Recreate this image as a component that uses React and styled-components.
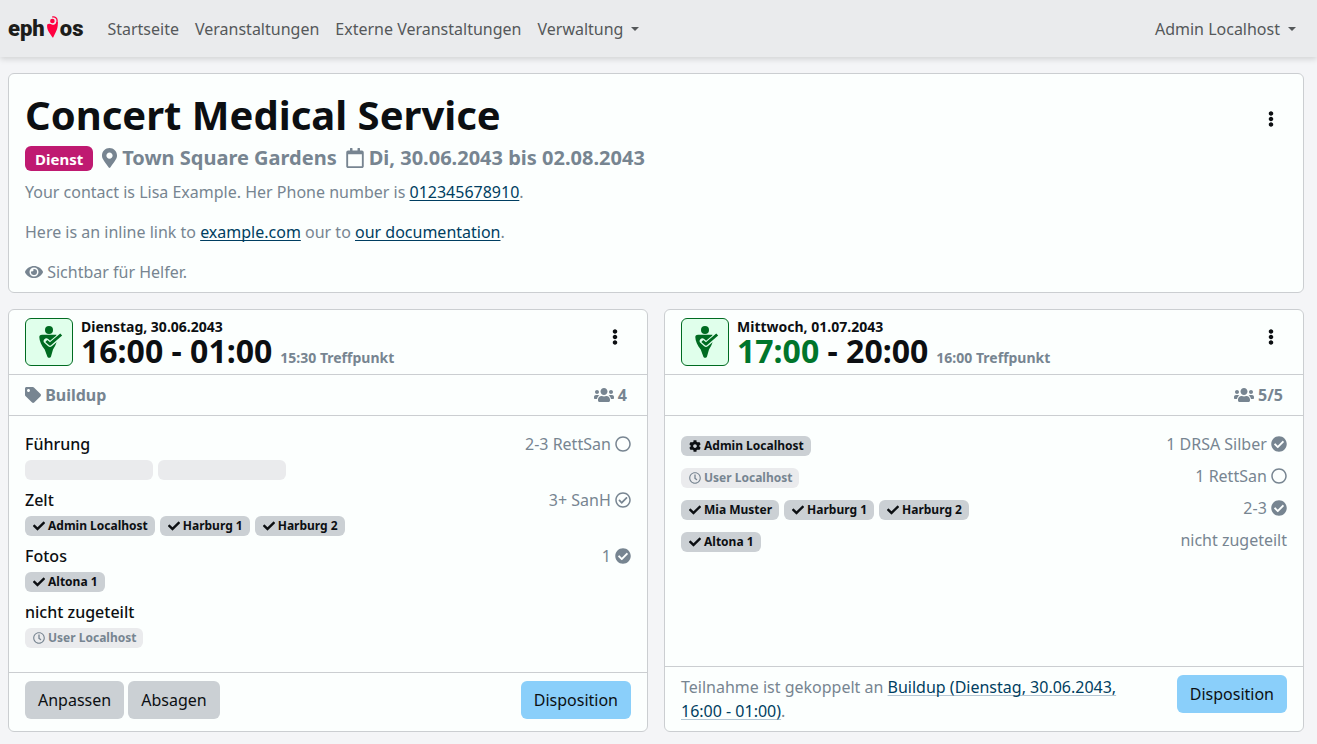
import React from "react";
import styled, { createGlobalStyle } from "styled-components";
import {
  FaCheck,
  FaCheckCircle,
  FaCog,
  FaEllipsisV,
  FaEye,
  FaMapMarkerAlt,
  FaRegCalendar,
  FaRegCheckCircle,
  FaRegCircle,
  FaRegClock,
  FaTag,
  FaUsers,
} from "react-icons/fa";

const color = {
  page: "#f4f5f7",
  nav: "#eaebed",
  card: "#fcfffe",
  line: "#cbced1",
  text: "#0c0f12",
  muted: "#778591",
  link: "#003e61",
  secondary: "#cbd0d4",
  primary: "#8acffa",
  faint: "#eaebed",
  pink: "#bf1a71",
  green: "#00752b",
  confirmed: "#006b21",
  confirmedFill: "#e0ffeb",
};

const GlobalStyle = createGlobalStyle`
  *, *::before, *::after { box-sizing: border-box; }
  body {
    margin: 0;
    background: ${color.page};
    color: ${color.text};
    font: 400 16px/24px "Noto Sans", sans-serif;
  }
  h1, h2, h3, p, ul { margin: 0; padding: 0; }
  ul { list-style: none; }
  svg { flex: none; vertical-align: -0.125em; }
`;

/* Font Awesome glyphs have different widths at the same height. */
const EyeIcon = styled(FaEye)`
  width: 18px;
`;
const MarkerIcon = styled(FaMapMarkerAlt)`
  width: 15px;
`;
const CalendarIcon = styled(FaRegCalendar)`
  width: 18px;
`;
const UsersIcon = styled(FaUsers)`
  width: 20px;
`;
const MenuIcon = styled(FaEllipsisV)`
  width: 6px;
`;

const Navbar = styled.nav`
  display: flex;
  align-items: center;
  padding: 9px 13px 8px 8px;
  background: ${color.nav};
  box-shadow: 0 2px 6px rgba(0, 0, 0, 0.15);
`;

const Brand = styled.a`
  display: flex;
  align-items: center;
  margin-right: 16px;
  color: #1d1d1b;
  font: 900 22px/32px "Roboto", sans-serif;
  text-decoration: none;
  svg { width: 11px; height: 22px; margin: 0 2px 4px; }
`;

const NavLinks = styled.div`
  display: flex;
  flex: 1;
`;

const NavLink = styled.a`
  padding: 8px;
  color: #55585a;
  text-decoration: none;
  white-space: nowrap;
  margin-left: ${(p) => (p.$end ? "auto" : "0")};
`;

const Caret = styled.span`
  display: inline-block;
  margin-left: 8px;
  vertical-align: 4px;
  border: 4px solid transparent;
  border-top: 4px solid currentColor;
  border-bottom: 0;
`;

const Page = styled.main`
  display: flex;
  flex-direction: column;
  gap: 16px;
  padding: 16px 13px 12px 8px;
`;

const Card = styled.section`
  display: flex;
  flex-direction: column;
  background: ${color.card};
  border: 1px solid ${color.line};
  border-radius: 6px;
`;

const EventBody = styled.div`
  display: flex;
  flex-direction: column;
  padding: 16px 16px 8px;
  color: ${color.muted};
`;

const TitleRow = styled.div`
  display: flex;
  align-items: flex-end;
  justify-content: space-between;
  height: 48px;
  margin-bottom: 8px;
`;

const Title = styled.h1`
  align-self: flex-start;
  color: ${color.text};
  font-size: 40px;
  line-height: 50px;
`;

const Facts = styled.div`
  display: flex;
  align-items: flex-start;
  gap: 9px;
  height: 26px;
  margin-bottom: 8px;
  font-size: 20px;
  font-weight: 700;
  line-height: 24px;
`;

const Fact = styled.span`
  display: flex;
  align-items: center;
  gap: 5px;
`;

const TypeBadge = styled.span`
  padding: 2px 10px 0;
  color: #fff;
  background: ${color.pink};
  border-radius: 6px;
  font-size: 15px;
  line-height: 23px;
`;

const Paragraph = styled.p`
  & + & { margin-top: 16px; }
`;

const Link = styled.a`
  color: ${color.link};
  text-decoration: underline 1px ${(p) => (p.$soft ? "#b4c6d3" : color.link)};
  text-underline-offset: 2px;
  text-decoration-skip-ink: none;
`;

const MenuButton = styled.button`
  display: flex;
  align-items: center;
  height: 38px;
  padding: 0 13px;
  border: 0;
  background: none;
  color: ${color.text};
  font-size: 16px;
`;

const Shifts = styled.div`
  display: grid;
  grid-template-columns: repeat(2, minmax(0, 1fr));
  gap: 16px;
`;

const ShiftHeader = styled.header`
  display: flex;
  align-items: flex-start;
  gap: 8px;
  padding: 8px 16px;
  border-bottom: 1px solid ${color.line};
`;

const StateIcon = styled.div`
  width: 48px;
  height: 48px;
  color: ${color.confirmed};
  background: ${color.confirmedFill};
  border: 1px solid currentColor;
  border-radius: 6px;
  svg { display: block; width: 46px; height: 46px; }
`;

const When = styled.div`
  flex: 1;
  font-weight: 700;
`;

const Day = styled.div`
  font-size: 14px;
  line-height: 17px;
`;

const Time = styled.h2`
  display: flex;
  align-items: baseline;
  gap: 8px;
  font-size: 32px;
  line-height: 31px;
`;

const Early = styled.span`
  color: ${color.green};
`;

const Meeting = styled.small`
  color: ${color.muted};
  font-size: 14px;
  line-height: 17px;
`;

const InfoRow = styled.div`
  display: flex;
  justify-content: space-between;
  padding: 8px 20px 8px 16px;
  border-bottom: 1px solid ${color.line};
  color: ${color.muted};
  font-weight: 700;
`;

const ShiftBody = styled.ul`
  display: flex;
  flex: 1;
  flex-direction: column;
  gap: 8px;
  padding: 16px 16px 24px;
`;

const Row = styled.li`
  display: flex;
  justify-content: space-between;
  align-items: flex-end;
`;

const BlockTitle = styled.span`
  font-weight: 500;
`;

const Need = styled.span`
  color: ${color.muted};
`;

const Badges = styled.div`
  display: flex;
  flex-wrap: wrap;
  gap: 5px;
  margin-top: ${(p) => (p.$below ? "4px" : "0")};
`;

const Badge = styled.span`
  display: flex;
  align-items: center;
  gap: 3px;
  min-width: ${(p) => (p.$empty ? "128px" : "0")};
  height: 20px;
  padding: 0 7px 0 8px;
  color: ${(p) => (p.$faint ? color.muted : color.text)};
  background: ${(p) => (p.$faint ? color.faint : color.secondary)};
  border-radius: 6px;
  font-size: 12px;
  font-weight: 700;
  line-height: 20px;
`;

const ShiftFooter = styled.footer`
  display: flex;
  align-items: flex-start;
  gap: 4px;
  padding: ${(p) => (p.$roomy ? "8px 16px 12px" : "8px 16px")};
  border-top: 1px solid ${color.line};
  color: ${color.muted};
`;

const Note = styled.p`
  flex: 1;
  padding-right: 48px;
`;

const Button = styled.button`
  height: 38px;
  padding: 0 13px;
  margin-left: ${(p) => (p.$primary ? "auto" : "0")};
  border: 0;
  border-radius: 6px;
  color: ${color.text};
  background: ${(p) => (p.$primary ? color.primary : color.secondary)};
  font: inherit;
`;

const badgeIcons = { check: FaCheck, cog: FaCog, clock: FaRegClock };
const needIcons = { open: FaRegCircle, enough: FaRegCheckCircle, full: FaCheckCircle };

function LogoFigure() {
  return (
    <svg viewBox="0 0 10 20" aria-hidden="true">
      <circle cx="4.900" cy="4.500" r="2.100" fill="#ff0040" />
      <path
        d="M4.800 .9C7.500 .4 9.300 2 9.200 4.600C9.200 6.300 8.800 7.300 8 8.500"
        fill="none"
        stroke="#ff0040"
        strokeWidth="1.200"
      />
      <path
        d="M.2 7.700C1.500 6.600 3 7 5 8C7 8 8.200 7 8.600 5.400L9.800 5.400C10 9 9.500 12 8 14.500L5.600 19.600H5L1.700 14.500C.3 12-.2 9.600 .2 7.700Z"
        fill="#ff0040"
      />
    </svg>
  );
}

function ConfirmedFigure() {
  return (
    <svg viewBox="0 0 46 46" role="img" aria-label="Bestätigt">
      <circle cx="23" cy="11" r="4" fill="currentColor" />
      <path
        d="M13.300 18C13.300 16.500 14.500 15.700 16 15.700H30.500V23C30 25.500 28.300 28.500 27 30.500L25 37.500C24.600 39.200 21.700 39.200 21.300 37.500L18.700 30.500C15.500 26.500 13.300 22 13.300 18Z"
        fill="currentColor"
      />
      <path
        d="M20.400 22L24 25.200L36 15.200"
        fill="none"
        stroke={color.confirmedFill}
        strokeWidth="5.400"
        strokeLinecap="round"
        strokeLinejoin="round"
      />
      <path
        d="M20.300 22L24 25.200L35.200 15.500"
        fill="none"
        stroke="currentColor"
        strokeWidth="2.900"
        strokeLinejoin="round"
      />
    </svg>
  );
}

function Person({ icon, name }) {
  const Icon = badgeIcons[icon];
  return (
    <Badge $faint={icon === "clock"}>
      <Icon /> {name}
    </Badge>
  );
}

function Requirement({ text, state }) {
  const Icon = needIcons[state];
  return (
    <Need>
      {text} {Icon && <Icon />}
    </Need>
  );
}

function People({ people, below }) {
  return (
    <Badges $below={below}>
      {people.map(([icon, name], i) =>
        icon ? <Person key={i} icon={icon} name={name} /> : <Badge key={i} $faint $empty />
      )}
    </Badges>
  );
}

function ShiftTop({ day, children, meeting }) {
  return (
    <ShiftHeader>
      <StateIcon>
        <ConfirmedFigure />
      </StateIcon>
      <When>
        <Day>{day}</Day>
        <Time>
          <span>{children}</span>
          <Meeting>{meeting} Treffpunkt</Meeting>
        </Time>
      </When>
      <MenuButton type="button" aria-label="Schichtmenü">
        <MenuIcon />
      </MenuButton>
    </ShiftHeader>
  );
}

const buildup = [
  { title: "Führung", need: "2-3 RettSan", state: "open", people: [[], []] },
  {
    title: "Zelt",
    need: "3+ SanH",
    state: "enough",
    people: [["check", "Admin Localhost"], ["check", "Harburg 1"], ["check", "Harburg 2"]],
  },
  { title: "Fotos", need: "1", state: "full", people: [["check", "Altona 1"]] },
  { title: "nicht zugeteilt", people: [["clock", "User Localhost"]] },
];

const service = [
  { need: "1 DRSA Silber", state: "full", people: [["cog", "Admin Localhost"]] },
  { need: "1 RettSan", state: "open", people: [["clock", "User Localhost"]] },
  {
    need: "2-3",
    state: "full",
    people: [["check", "Mia Muster"], ["check", "Harburg 1"], ["check", "Harburg 2"]],
  },
  { need: "nicht zugeteilt", people: [["check", "Altona 1"]] },
];

export default function App() {
  return (
    <>
      <GlobalStyle />
      <Navbar>
        <Brand href="#" aria-label="ephios">
          <span>eph</span>
          <LogoFigure />
          <span>os</span>
        </Brand>
        <NavLinks>
          <NavLink href="#">Startseite</NavLink>
          <NavLink href="#">Veranstaltungen</NavLink>
          <NavLink href="#">Externe Veranstaltungen</NavLink>
          <NavLink href="#">
            Verwaltung
            <Caret />
          </NavLink>
          <NavLink href="#" $end>
            Admin Localhost
            <Caret />
          </NavLink>
        </NavLinks>
      </Navbar>
      <Page>
        <Card>
          <EventBody>
            <TitleRow>
              <Title>Concert Medical Service</Title>
              <MenuButton type="button" aria-label="Veranstaltungsmenü">
                <MenuIcon />
              </MenuButton>
            </TitleRow>
            <Facts>
              <TypeBadge>Dienst</TypeBadge>
              <Fact>
                <MarkerIcon />
                Town Square Gardens
              </Fact>
              <Fact>
                <CalendarIcon />
                Di, 30.06.2043 bis 02.08.2043
              </Fact>
            </Facts>
            <Paragraph>
              Your contact is Lisa Example. Her Phone number is <Link href="#">012345678910</Link>.
            </Paragraph>
            <Paragraph>
              Here is an inline link to <Link href="#">example.com</Link> our to{" "}
              <Link href="#">our documentation</Link>.
            </Paragraph>
            <Paragraph>
              <EyeIcon /> Sichtbar für Helfer.
            </Paragraph>
          </EventBody>
        </Card>
        <Shifts>
          <Card>
            <ShiftTop day="Dienstag, 30.06.2043" meeting="15:30">
              16:00 - 01:00
            </ShiftTop>
            <InfoRow>
              <span>
                <FaTag /> Buildup
              </span>
              <span>
                <UsersIcon /> 4
              </span>
            </InfoRow>
            <ShiftBody>
              {buildup.map((block) => (
                <li key={block.title}>
                  <Row as="div">
                    <BlockTitle>{block.title}</BlockTitle>
                    <Requirement text={block.need} state={block.state} />
                  </Row>
                  <People people={block.people} below />
                </li>
              ))}
            </ShiftBody>
            <ShiftFooter $roomy>
              <Button type="button">Anpassen</Button>
              <Button type="button">Absagen</Button>
              <Button type="button" $primary>
                Disposition
              </Button>
            </ShiftFooter>
          </Card>
          <Card>
            <ShiftTop day="Mittwoch, 01.07.2043" meeting="16:00">
              <Early>17:00</Early> - 20:00
            </ShiftTop>
            <InfoRow>
              <span />
              <span>
                <UsersIcon /> 5/5
              </span>
            </InfoRow>
            <ShiftBody>
              {service.map((block) => (
                <Row key={block.need}>
                  <People people={block.people} />
                  <Requirement text={block.need} state={block.state} />
                </Row>
              ))}
            </ShiftBody>
            <ShiftFooter>
              <Note>
                Teilnahme ist gekoppelt an{" "}
                <Link href="#" $soft>
                  Buildup (Dienstag, 30.06.2043, 16:00 - 01:00)
                </Link>
                .
              </Note>
              <Button type="button" $primary>
                Disposition
              </Button>
            </ShiftFooter>
          </Card>
        </Shifts>
      </Page>
    </>
  );
}
